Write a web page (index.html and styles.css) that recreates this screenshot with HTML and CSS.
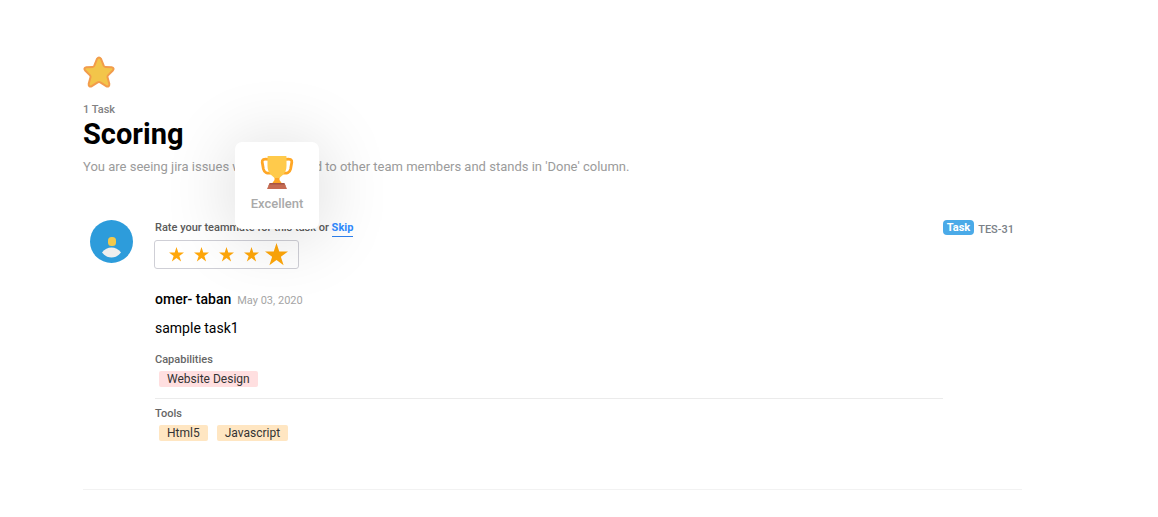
FILE: index.html
```html
<!DOCTYPE html>
<html lang="en">
<head>
<meta charset="utf-8">
<meta name="viewport" content="width=device-width, initial-scale=1">
<title>Scoring</title>
<link rel="stylesheet" href="styles.css">
</head>
<body>
<main class="page">
  <header class="page-head">
    <svg class="head-star" viewBox="0 0 32 32" aria-hidden="true">
      <path d="M14 2.8Q16 0 18 2.8L20.7 9.7Q21.2 10.8 22.4 10.9L28.600 11.300Q32 12 29.600 14.800L25 19.4Q24.2 20.2 24.5 21.3L26.3 27.8Q26.6 31.2 23.2 30.2L17.3 26.3Q16 25.5 14.7 26.3L8.8 30.2Q5.4 31.2 5.7 27.8L7.5 21.3Q7.8 20.2 7 19.4L2.400 14.800Q0 12 3.400 11.300L9.6 10.9Q10.8 10.8 11.3 9.7Z" fill="#f3c54a" stroke="#f29c4b" stroke-width="2" stroke-linejoin="round"/>
    </svg>
    <p class="count">1 Task</p>
    <h1 class="title">Scoring</h1>
    <p class="intro">You are seeing jira issues which assigned to other team members and stands in 'Done' column.</p>
  </header>

  <article class="task">
    <svg class="avatar" viewBox="0 0 43 43" role="img" aria-label="omer- taban">
      <circle cx="21.500" cy="21.500" r="21.500" fill="#2d9cdb"/>
      <rect x="18" y="17" width="8" height="9" rx="3.500" fill="#f2c94c"/>
      <path d="M12 32.500Q16 27.500 21.500 27.500T31 32.500Q27 37.500 21.500 37.500T12 32.500Z" fill="#eee"/>
    </svg>

    <div class="task-body">
      <div class="prompt">Rate your teammate for this task or <a class="skip" href="#">Skip</a></div>
      <div class="rating-wrap">
        <div class="rating" role="radiogroup" aria-label="Rating">
          <label class="rate"><input class="star" type="radio" name="rating" aria-label="1 star"></label>
          <label class="rate"><input class="star" type="radio" name="rating" aria-label="2 stars"></label>
          <label class="rate"><input class="star" type="radio" name="rating" aria-label="3 stars"></label>
          <label class="rate"><input class="star" type="radio" name="rating" aria-label="4 stars"></label>
          <label class="rate"><input class="star" type="radio" name="rating" aria-label="5 stars" checked></label>
        </div>
        <div class="tip">
          <svg class="trophy" viewBox="0 0 34 34" aria-hidden="true">
            <path d="M8 4.300Q1.600 3.300 2.200 7.200L3.400 14Q4.600 19.500 12 17.800M26 4.300Q32.400 3.300 31.800 7.200L30.600 14Q29.400 19.500 22 17.800" fill="none" stroke="#ffa726" stroke-width="2.800"/>
            <path d="M14.500 21H19.500V25L22 28.500H12L14.500 25Z" fill="#ffa726"/>
            <path d="M7.500 1.500Q7.500 1 8.200 1H25.800Q26.500 1 26.500 1.500V11C26.500 18 22 20.500 19.500 23H14.500C12 20.500 7.500 18 7.500 11Z" fill="#ffca4b"/>
            <path d="M9.500 28H24.500L25.500 31H8.500Z" fill="#a65443"/>
            <path d="M9 29.500H25L27 34H7Z" fill="#c56b52"/>
          </svg>
          <span class="tip-label">Excellent</span>
        </div>
      </div>
      <div class="author">
        <strong class="name">omer- taban</strong>
        <time class="date" datetime="2020-05-03">May 03, 2020</time>
      </div>
      <p class="summary">sample task1</p>
      <section class="group">
        <h2 class="group-title">Capabilities</h2>
        <div class="tags"><span class="tag tag-red">Website Design</span></div>
      </section>
      <section class="group">
        <h2 class="group-title">Tools</h2>
        <div class="tags"><span class="tag tag-amber">Html5</span><span class="tag tag-amber">Javascript</span></div>
      </section>
    </div>

    <div class="issue"><span class="badge">Task</span><span class="key">TES-31</span></div>
  </article>
</main>
</body>
</html>
```
FILE: styles.css
```css
* { box-sizing: border-box; }
body {
  margin: 0;
  background: #fff;
  color: #000;
  font-family: Roboto, "Liberation Sans", sans-serif;
}
p, h1, h2 { margin: 0; }
.page { padding: 56px 136px 0 83px; }
.page-head { display: flex; flex-direction: column; align-items: flex-start; }
.head-star { width: 32px; height: 32px; }
.count { margin-top: 14px; font-size: 11px; line-height: 16px; font-weight: 500; color: #828282; }
.title { font-size: 29px; line-height: 32px; font-weight: 700; }
.intro { margin-top: 8px; font-size: 13px; line-height: 18px; color: #9b9b9b; }

.task {
  display: flex;
  align-items: flex-start;
  margin-top: 44px;
  padding: 0 8px 48px 7px;
  border-bottom: 1px solid #f2f2f2;
}
.avatar { flex: none; width: 43px; height: 43px; }
.task-body { flex: 1; min-width: 0; margin-left: 22px; }
.prompt { font-size: 11px; line-height: 16px; font-weight: 500; color: #5a5a5a; }
.skip {
  display: inline-block;
  border-bottom: 1px solid #2f80ed;
  color: #2f8cff;
  font-weight: 700;
  text-decoration: none;
}
.rating-wrap { position: relative; display: table; margin: 3px 0 0 -1px; }
.rating {
  display: flex;
  width: 145px;
  height: 29px;
  padding: 0 9px;
  border: 1px solid #cfcfd6;
  border-radius: 3px;
}
.rate { display: flex; flex: 1; align-items: center; justify-content: center; }
.star {
  appearance: none;
  flex: none;
  width: 15px;
  height: 15px;
  margin: 0;
  background: #ffa70a;
  clip-path: polygon(50% 0, 62% 37%, 100% 37%, 69% 60%, 81% 97%, 50% 74%, 19% 97%, 31% 60%, 0 37%, 38% 37%);
}
.star:checked { width: 23px; height: 23px; }
.tip {
  position: absolute;
  right: -20px;
  bottom: 40px;
  display: flex;
  flex-direction: column;
  align-items: center;
  width: 84px;
  padding: 13px 0 17px;
  border-radius: 7px;
  background: #fff;
  box-shadow: 0 4px 72px rgba(0, 0, 0, .16);
}
.trophy { width: 34px; height: 34px; }
.tip-label { margin-top: 7px; font-size: 13px; line-height: 16px; font-weight: 500; color: #a9a9a9; }

.author { display: flex; align-items: baseline; gap: 6px; margin-top: 20px; line-height: 20px; }
.name { font-size: 14px; font-weight: 500; }
.date { font-size: 11px; color: #a5a5a5; }
.summary { margin-top: 7px; font-size: 14px; line-height: 20px; }
.group { padding: 7px 0 11px; }
.summary + .group { margin-top: 7px; }
.group + .group { border-top: 1px solid #ebebeb; padding-bottom: 0; }
.group-title { font-size: 11px; line-height: 15px; font-weight: 500; color: #666; }
.tags { display: flex; gap: 9px; margin: 4px 0 0 4px; }
.tag { padding: 0 8px; border-radius: 2px; font-size: 12px; line-height: 16px; color: #333; }
.tag-red { background: #ffdfe0; }
.tag-amber { background: #ffe6c2; }

.issue { display: flex; align-items: flex-start; gap: 4px; font-size: 11px; font-weight: 700; line-height: 15px; }
.badge { padding: 0 4px; border-radius: 4px; background: #4aaae8; color: #fff; }
.key { margin-top: 2px; font-weight: 500; color: #7b8188; }
```
